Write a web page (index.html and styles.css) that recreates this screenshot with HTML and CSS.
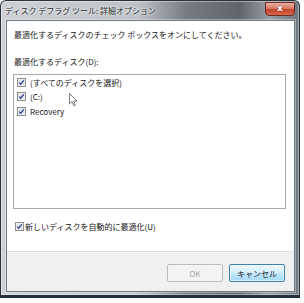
FILE: index.html
```html
<!DOCTYPE html>
<html lang="ja">
<head>
  <meta charset="UTF-8" />
  <title>ディスク デフラグ ツール: 詳細オプション</title>
  <link rel="stylesheet" href="styles.css">
</head>
<body>
  <div class="window">
    <div class="titlebar">
      <span class="title">ディスク デフラグ ツール: 詳細オプション</span>
      <span class="close">x</span>
    </div>

    <div class="client">
      <div class="main">
        <p class="intro">最適化するディスクのチェック ボックスをオンにしてください。</p>
        <p class="label">最適化するディスク(D):</p>

        <div class="listbox">
          <div class="item">
            <svg class="check" width="9" height="9" viewBox="0 0 9 9"><rect x="0.5" y="0.5" width="8" height="8" fill="#f4f4f4" stroke="#8f8f8f"/><rect x="1.5" y="1.5" width="6" height="6" fill="#e2e4e8"/><path d="M2.2 4.6 L3.7 6.2 L6.8 2.4" fill="none" stroke="#34449a" stroke-width="1.3"/></svg>
            <span>(すべてのディスクを選択)</span>
          </div>
          <div class="item">
            <svg class="check" width="9" height="9" viewBox="0 0 9 9"><rect x="0.5" y="0.5" width="8" height="8" fill="#f4f4f4" stroke="#8f8f8f"/><rect x="1.5" y="1.5" width="6" height="6" fill="#e2e4e8"/><path d="M2.2 4.6 L3.7 6.2 L6.8 2.4" fill="none" stroke="#34449a" stroke-width="1.3"/></svg>
            <span>(C:)</span>
          </div>
          <div class="item">
            <svg class="check" width="9" height="9" viewBox="0 0 9 9"><rect x="0.5" y="0.5" width="8" height="8" fill="#f4f4f4" stroke="#8f8f8f"/><rect x="1.5" y="1.5" width="6" height="6" fill="#e2e4e8"/><path d="M2.2 4.6 L3.7 6.2 L6.8 2.4" fill="none" stroke="#34449a" stroke-width="1.3"/></svg>
            <span>Recovery</span>
          </div>
        </div>

        <div class="auto">
          <svg class="check" width="9" height="9" viewBox="0 0 9 9"><rect x="0.5" y="0.5" width="8" height="8" fill="#f4f4f4" stroke="#8f8f8f"/><rect x="1.5" y="1.5" width="6" height="6" fill="#e2e4e8"/><path d="M2.2 4.6 L3.7 6.2 L6.8 2.4" fill="none" stroke="#34449a" stroke-width="1.3"/></svg>
          <span>新しいディスクを自動的に最適化(U)</span>
        </div>
      </div>

      <div class="footer">
        <button class="btn" disabled>OK</button>
        <button class="btn default">キャンセル</button>
      </div>
    </div>

    <!-- mouse pointer -->
    <svg class="cursor" width="10" height="14" viewBox="0 0 10 14">
      <path d="M0.5 0.5 L0.5 11 L3 8.6 L4.8 12.8 L6.4 12.1 L4.7 8.1 L8 8.1 Z" fill="#fff" stroke="#6a6a6a" stroke-width="0.9"/>
    </svg>
  </div>
</body>
</html>
```

FILE: styles.css
```css
body {
  margin: 0;
  background: #fff;
  font-family: "Noto Sans CJK JP", "Noto Sans", sans-serif;
  font-size: 8px;
  color: #141414;
}

.window {
  position: relative;
  width: 298px;
  height: 294px;
  display: flex;
  flex-direction: column;
  border: 1px solid #2a3138;
  border-bottom: 3px solid #22323c;
  border-radius: 6px 6px 0 0;
  background: linear-gradient(to right, #cdd0d4 0, #bfc3c8 46%, #767c82 62%, #5f656b 80%, #979da2 90%, #6f767c 100%);
  box-shadow: inset 0 0 0 1px rgba(255, 255, 255, 0.4);
}

.titlebar {
  height: 19px;
  display: flex;
  align-items: flex-start;
  justify-content: space-between;
  padding-left: 4px;
}

.title {
  margin-top: 3px;
  line-height: 13px;
  color: #1c1c1c;
  text-shadow: 0 0 3px #fff, 0 0 2px #fff;
}

.close {
  margin: 1px 4px 0 0;
  width: 28px;
  height: 12px;
  line-height: 11px;
  text-align: center;
  font-family: "DejaVu Sans", sans-serif;
  font-weight: bold;
  font-size: 9px;
  color: #fff;
  border: 1px solid #6b2d22;
  border-radius: 0 0 4px 4px;
  background: linear-gradient(to bottom, #eab0a2 0, #d77b66 45%, #c0422b 55%, #d9684c 100%);
  text-shadow: 0 0 2px #6b1f10;
}

.client {
  flex: 1;
  margin: 0 4px 3px 5px;
  display: flex;
  flex-direction: column;
  background: #fff;
  border: 1px solid #6f7a83;
  box-shadow: 0 0 0 1px rgba(255, 255, 255, 0.35);
}

.main {
  flex: 1;
  padding: 7px 8px 0 6px;
}

.intro {
  margin: 0 0 0 1px;
  line-height: 14px;
}

.label {
  margin: 13px 0 0 1px;
  line-height: 14px;
}

.listbox {
  margin-top: 5px;
  height: 133px;
  border: 1px solid #a7abb0;
  padding: 0 3px;
}

.item {
  height: 14.5px;
  display: flex;
  align-items: center;
  gap: 4px;
}

.check {
  flex: none;
}

.auto {
  margin-top: 10px;
  margin-left: 2px;
  height: 14px;
  display: flex;
  align-items: center;
  gap: 1px;
}

.footer {
  height: 40px;
  border-top: 1px solid #dcdcdc;
  background: #f0f0f0;
  display: flex;
  justify-content: flex-end;
  align-items: flex-start;
  gap: 6px;
  padding: 12px 9px 0 0;
  box-sizing: border-box;
}

.btn {
  width: 56px;
  height: 18px;
  padding: 0;
  font-family: inherit;
  font-size: 8px;
  border-radius: 2px;
}

.btn[disabled] {
  color: #a8a8a8;
  background: #f4f4f4;
  border: 1px solid #b9bdc0;
}

.btn.default {
  color: #1e1e1e;
  border: 1px solid #3c7fb1;
  background: linear-gradient(to bottom, #eaf6fd 0, #d9f0fc 45%, #bee6fd 55%, #a7d9f5 100%);
  box-shadow: inset 0 0 0 1px rgba(255, 255, 255, 0.6);
}

.cursor {
  position: absolute;
  left: 68px;
  top: 92px;
}
```
